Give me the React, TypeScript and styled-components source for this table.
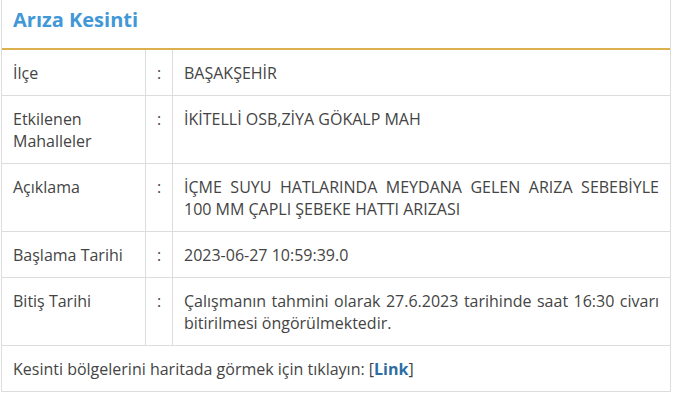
import React from 'react';
import styled, { createGlobalStyle } from 'styled-components';

const GlobalStyle = createGlobalStyle`
  body {
    margin: 0;
    background: #ffffff;
    font-family: 'Open Sans', 'Liberation Sans', sans-serif;
  }
`;

const Panel = styled.div`
  box-sizing: border-box;
  width: 670px;
  margin-left: 1px;
  border: 1px solid #dddddd;
  border-top: none;
  background: #ffffff;
`;

const Heading = styled.h3`
  margin: 0;
  padding: 6px 12px 14px 11px;
  font-size: 20px;
  line-height: 28px;
  font-weight: 700;
  color: #4298d6;
  border-bottom: 2px solid #dcb04c;
`;

const Grid = styled.div`
  display: grid;
  grid-template-columns: 144px 27px 1fr;
  font-size: 16px;
  line-height: 22px;
  color: #444444;
`;

const Cell = styled.div<{ $align?: 'left' | 'center' | 'justify'; $last?: boolean }>`
  padding: 12px 11px 11px 11px;
  border-bottom: 1px solid #dddddd;
  border-right: ${(p) => (p.$last ? 'none' : '1px solid #dddddd')};
  text-align: ${(p) => p.$align || 'left'};
`;

const Colon = styled(Cell)`
  padding-left: 0;
  padding-right: 0;
`;

const Footer = styled.div`
  padding: 12px 12px 11px 11px;
  font-size: 16px;
  line-height: 22px;
  color: #444444;
`;

const MapLink = styled.a`
  color: #2d6da3;
  font-weight: 700;
  text-decoration: none;
`;

type Row = { label: string; value: string };

const rows: Row[] = [
  { label: 'İlçe', value: 'BAŞAKŞEHİR' },
  { label: 'Etkilenen Mahalleler', value: 'İKİTELLİ OSB,ZİYA GÖKALP MAH' },
  {
    label: 'Açıklama',
    value: 'İÇME SUYU HATLARINDA MEYDANA GELEN ARIZA SEBEBİYLE 100 MM ÇAPLI ŞEBEKE HATTI ARIZASI',
  },
  { label: 'Başlama Tarihi', value: '2023-06-27 10:59:39.0' },
  {
    label: 'Bitiş Tarihi',
    value: 'Çalışmanın tahmini olarak 27.6.2023 tarihinde saat 16:30 civarı bitirilmesi öngörülmektedir.',
  },
];

export default function App() {
  return (
    <>
      <GlobalStyle />
      <Panel>
        <Heading>Arıza Kesinti</Heading>
        <Grid>
          {rows.map((r) => (
            <React.Fragment key={r.label}>
              <Cell>{r.label}</Cell>
              <Colon $align="center">:</Colon>
              <Cell $align="justify" $last>
                {r.value}
              </Cell>
            </React.Fragment>
          ))}
        </Grid>
        <Footer>
          Kesinti bölgelerini haritada görmek için tıklayın: [<MapLink href="#">Link</MapLink>]
        </Footer>
      </Panel>
    </>
  );
}
